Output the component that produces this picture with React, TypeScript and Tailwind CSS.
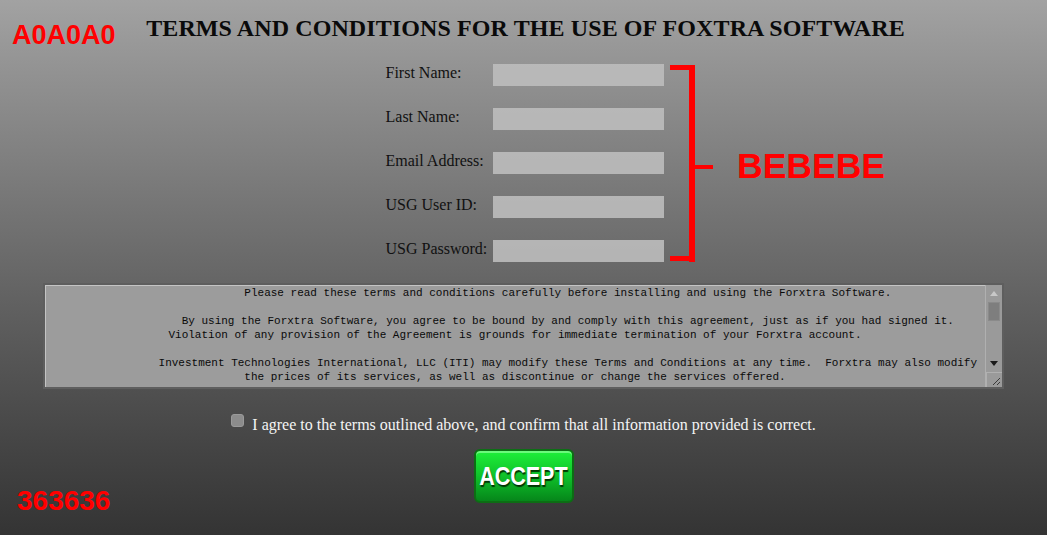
import React from "react";

const serif = { fontFamily: '"Liberation Serif", "Times New Roman", serif' };

const labels = ["First Name:", "Last Name:", "Email Address:", "USG User ID:", "USG Password:"];

const pad = " ".repeat(16);
const lines: string[] = [
  pad + "Please read these terms and conditions carefully before installing and using the Forxtra Software.",
  " ",
  pad + "By using the Forxtra Software, you agree to be bound by and comply with this agreement, just as if you had signed it.",
  "Violation of any provision of the Agreement is grounds for immediate termination of your Forxtra account.",
  " ",
  pad + "Investment Technologies International, LLC (ITI) may modify these Terms and Conditions at any time.  Forxtra may also modify",
  "the prices of its services, as well as discontinue or change the services offered.",
];

export default function App() {
  return (
    <div
      className="relative h-[535px] w-full overflow-hidden bg-linear-to-b from-[#a2a2a2] to-[#343434]"
      style={serif}
    >
      <div className="flex flex-col items-center">
        <h1 className="pl-[4px] pt-[14px] text-[24px] font-bold leading-[28px] tracking-[0.1px] text-[#0a0a0a]">
          TERMS AND CONDITIONS FOR THE USE OF FOXTRA SOFTWARE
        </h1>

        <div className="mt-[22px] flex flex-col gap-[22px] pl-[2px]">
          {labels.map((l) => (
            <div key={l} className="flex items-start">
              <span className="w-[107px] text-[16px] leading-[18px] text-[#111]">{l}</span>
              <div className="h-[22px] w-[171px] bg-[#bdbdbd]/90" />
            </div>
          ))}
        </div>

        <div className="relative mt-[21px] h-[106px] w-[961px] border-2 border-[#5e5e5e] bg-[#9c9c9c] shadow-[inset_1px_1px_0_#c4c4c4]">
          <div
            className="h-full overflow-hidden pr-[17px] pt-[1px] text-center text-[11px] leading-[14px] text-[#0a0a0a] whitespace-pre"
            style={{ fontFamily: '"Liberation Mono", "DejaVu Sans Mono", monospace' }}
          >
            {lines.map((t, i) => (
              <div key={i}>{t}</div>
            ))}
          </div>
          {/* scrollbar */}
          <div className="absolute right-0 top-0 flex h-full w-[17px] flex-col border-l border-[#b0b0b0] bg-[#9a9a9a]">
            <div className="flex h-[17px] items-center justify-center">
              <svg width="8" height="5" viewBox="0 0 8 5">
                <path d="M4 0 L8 5 L0 5 Z" fill="#c8c8c8" />
              </svg>
            </div>
            <div className="mx-auto h-[19px] w-[12px] border border-[#8a8a8a] bg-[#7e7e7e]" />
            <div className="flex-1" />
            <div className="flex h-[17px] items-center justify-center">
              <svg width="8" height="5" viewBox="0 0 8 5">
                <path d="M0 0 L8 0 L4 5 Z" fill="#1a1a1a" />
              </svg>
            </div>
            <div className="relative h-[15px] border-t border-l border-[#b0b0b0]">
              <svg className="absolute bottom-[1px] right-[1px]" width="9" height="9" viewBox="0 0 9 9">
                <path d="M1 8 L8 1 M5 8 L8 5" stroke="#3a3a3a" strokeWidth="1" />
              </svg>
            </div>
          </div>
        </div>

        <div className="mt-[25px] flex items-start">
          <div className="h-[13px] w-[13px] rounded-[3px] border border-[#9a9a9a] bg-[#8c8c8c]" />
          <span className="ml-[8px] mt-[2px] text-[16px] leading-[18px] text-[#f4f4f4]">
            I agree to the terms outlined above, and confirm that all information provided is correct.
          </span>
        </div>

        <button className="mt-[15px] flex h-[54px] w-[100px] items-center justify-center rounded-[6px] border-2 border-[#0c6e14] bg-linear-to-b from-[#1ef03a] via-[#0fc22a] to-[#06861a] shadow-[inset_0_2px_0_rgba(160,255,170,0.6)]">
          <span
            className="inline-block scale-x-[0.86] text-[25px] font-bold leading-none text-white [text-shadow:1px_2px_1px_rgba(0,40,0,0.9)]"
            style={{ fontFamily: '"Liberation Sans", Arial, sans-serif' }}
          >
            ACCEPT
          </span>
        </button>
      </div>

      {/* annotations */}
      <div
        className="absolute left-[12px] top-[22px] text-[27px] font-bold leading-none text-[#ff0000]"
        style={{ fontFamily: '"Liberation Sans", Arial, sans-serif' }}
      >
        A0A0A0
      </div>
      <div
        className="absolute left-[17px] top-[487px] text-[28px] font-bold leading-none text-[#ff0000]"
        style={{ fontFamily: '"Liberation Sans", Arial, sans-serif' }}
      >
        363636
      </div>
      <div
        className="absolute left-[737px] top-[149px] text-[35.5px] font-bold leading-none text-[#ff0000]"
        style={{ fontFamily: '"Liberation Sans", Arial, sans-serif' }}
      >
        BEBEBE
      </div>
      <svg className="absolute left-[670px] top-[65px]" width="44" height="197" viewBox="0 0 44 197">
        <rect x="0" y="0" width="24" height="5" fill="#ff0000" />
        <rect x="19" y="0" width="6" height="197" fill="#ff0000" />
        <rect x="0" y="191" width="24" height="5" fill="#ff0000" />
        <rect x="24" y="100" width="19" height="4" fill="#ff0000" />
      </svg>
    </div>
  );
}
